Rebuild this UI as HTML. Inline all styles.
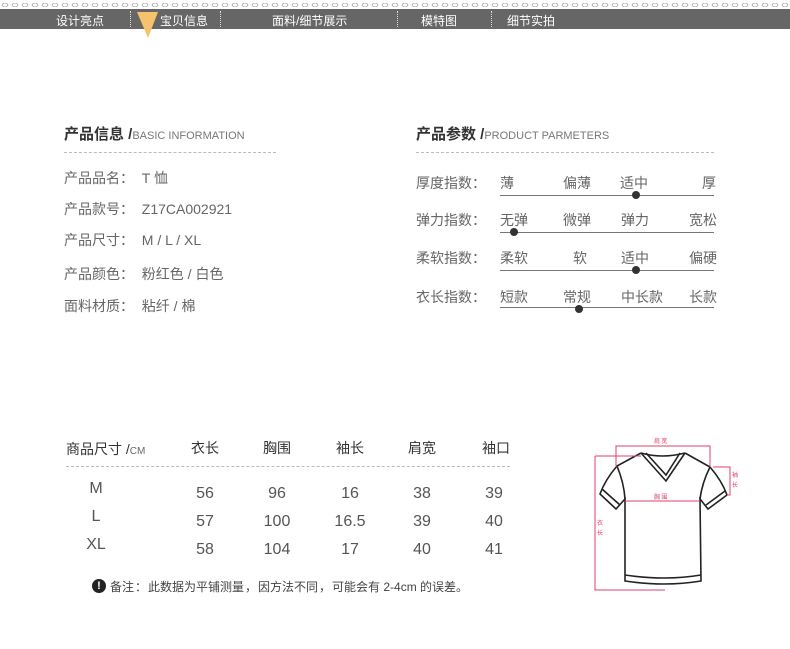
<!DOCTYPE html>
<html><head><meta charset="utf-8"><style>
*{margin:0;padding:0;box-sizing:border-box}
body{width:790px;height:649px;background:#fff;position:relative;overflow:hidden;font-family:"Liberation Sans","Noto Sans CJK SC",sans-serif;color:#555}
.a{position:absolute;white-space:nowrap}
.chain{position:absolute;left:0;top:2px;width:790px;height:6px;background:radial-gradient(ellipse 3.5px 2.3px at 5px 3px,transparent 2.2px,#aaa 2.4px,#aaa 3.2px,transparent 3.4px);background-size:10px 6px}
.nav{position:absolute;left:0;top:9px;width:790px;height:20px;background:#666;}
.nav span{position:absolute;top:3px;color:#fff;font-size:12px}
.dv{position:absolute;top:11px;height:16px;border-left:1px dotted #ddd}
.h{font-size:15px;font-weight:bold;color:#333}
.h small{font-size:11px;font-weight:normal;color:#777}
.dash{position:absolute;border-top:1px dashed #bbb;height:0}
.t{font-size:14px;color:#666}
.t b{font-weight:normal;display:inline-block;width:14px}
.ln{position:absolute;height:1px;background:#777}
.dot{position:absolute;width:8px;height:8px;border-radius:50%;background:#333}
.c{position:absolute;text-align:center;font-size:16px;color:#555;width:60px}
</style></head><body>
<div class="chain"></div>
<div class="nav">
<span style="left:56px">设计亮点</span>
<span style="left:160px">宝贝信息</span>
<span style="left:272px">面料/细节展示</span>
<span style="left:421px">模特图</span>
<span style="left:507px">细节实拍</span>
</div>
<div class="dv" style="left:130px"></div><div class="dv" style="left:220px"></div><div class="dv" style="left:397px"></div><div class="dv" style="left:491px"></div>
<svg class="a" style="left:137px;top:12px" width="22" height="27"><polygon points="0,0 21,0 11,26" fill="#f5c36b"/></svg>

<div class="a h" style="left:64px;top:123px">产品信息 /<small>BASIC INFORMATION</small></div>
<div class="dash" style="left:64px;top:152px;width:212px"></div>
<div class="a t" style="left:64px;top:168px">产品品名<b>：</b>&nbsp;&nbsp;T 恤</div>
<div class="a t" style="left:64px;top:199px">产品款号<b>：</b>&nbsp;&nbsp;Z17CA002921</div>
<div class="a t" style="left:64px;top:230px">产品尺寸<b>：</b>&nbsp;&nbsp;M / L / XL</div>
<div class="a t" style="left:64px;top:264px">产品颜色<b>：</b>&nbsp;&nbsp;粉红色 / 白色</div>
<div class="a t" style="left:64px;top:296px">面料材质<b>：</b>&nbsp;&nbsp;粘纤 / 棉</div>

<div class="a h" style="left:416px;top:123px">产品参数 /<small>PRODUCT PARMETERS</small></div>
<div class="dash" style="left:416px;top:152px;width:298px"></div>

<div class="a t" style="left:416px;top:173px">厚度指数<b>：</b></div>
<div class="a t" style="left:500px;top:173px">薄</div><div class="a t" style="left:563px;top:173px">偏薄</div><div class="a t" style="left:620px;top:173px">适中</div><div class="a t" style="left:702px;top:173px">厚</div>
<div class="ln" style="left:500px;top:195px;width:214px"></div><div class="dot" style="left:632px;top:191px"></div>

<div class="a t" style="left:416px;top:210px">弹力指数<b>：</b></div>
<div class="a t" style="left:500px;top:210px">无弹</div><div class="a t" style="left:563px;top:210px">微弹</div><div class="a t" style="left:621px;top:210px">弹力</div><div class="a t" style="left:689px;top:210px">宽松</div>
<div class="ln" style="left:500px;top:232px;width:214px"></div><div class="dot" style="left:510px;top:228px"></div>

<div class="a t" style="left:416px;top:248px">柔软指数<b>：</b></div>
<div class="a t" style="left:500px;top:248px">柔软</div><div class="a t" style="left:573px;top:248px">软</div><div class="a t" style="left:621px;top:248px">适中</div><div class="a t" style="left:689px;top:248px">偏硬</div>
<div class="ln" style="left:500px;top:270px;width:214px"></div><div class="dot" style="left:632px;top:266px"></div>

<div class="a t" style="left:416px;top:287px">衣长指数<b>：</b></div>
<div class="a t" style="left:500px;top:287px">短款</div><div class="a t" style="left:563px;top:287px">常规</div><div class="a t" style="left:621px;top:287px">中长款</div><div class="a t" style="left:689px;top:287px">长款</div>
<div class="ln" style="left:500px;top:307px;width:214px"></div><div class="dot" style="left:575px;top:305px"></div>

<div class="a" style="left:66px;top:439px;font-size:14px;color:#333">商品尺寸 /<span style="font-size:10px;color:#666">CM</span></div>
<div class="c" style="left:175px;top:438px;font-size:14px;color:#333">衣长</div>
<div class="c" style="left:247px;top:438px;font-size:14px;color:#333">胸围</div>
<div class="c" style="left:320px;top:438px;font-size:14px;color:#333">袖长</div>
<div class="c" style="left:392px;top:438px;font-size:14px;color:#333">肩宽</div>
<div class="c" style="left:466px;top:438px;font-size:14px;color:#333">袖口</div>
<div class="dash" style="left:66px;top:466px;width:444px"></div>

<div class="c" style="left:66px;top:480px">M</div><div class="c" style="left:66px;top:508px">L</div><div class="c" style="left:66px;top:536px">XL</div>
<div class="c" style="left:175px;top:485px">56</div><div class="c" style="left:247px;top:485px">96</div><div class="c" style="left:320px;top:485px">16</div><div class="c" style="left:392px;top:485px">38</div><div class="c" style="left:464px;top:485px">39</div>
<div class="c" style="left:175px;top:513px">57</div><div class="c" style="left:247px;top:513px">100</div><div class="c" style="left:320px;top:513px">16.5</div><div class="c" style="left:392px;top:513px">39</div><div class="c" style="left:464px;top:513px">40</div>
<div class="c" style="left:175px;top:541px">58</div><div class="c" style="left:247px;top:541px">104</div><div class="c" style="left:320px;top:541px">17</div><div class="c" style="left:392px;top:541px">40</div><div class="c" style="left:464px;top:541px">41</div>

<div class="a" style="left:92px;top:579px;width:14px;height:14px;border-radius:50%;background:#222;color:#fff;font-size:11px;font-weight:bold;text-align:center;line-height:14px">!</div>
<div class="a" style="left:110px;top:578px;font-size:12px;color:#444">备注<span style="display:inline-block;width:14px;text-align:center">：</span>此数据为平铺测量<span style="display:inline-block;width:14px;text-align:center">，</span>因方法不同<span style="display:inline-block;width:14px;text-align:center">，</span>可能会有 2-4cm 的误差。</div>

<svg class="a" style="left:580px;top:425px" width="170" height="170" viewBox="0 0 170 170">
<g fill="none" stroke="#222" stroke-width="1.6">
<path d="M61,28 L86,56 L105,28"/>
<path d="M66,28 L86,50 L100,28"/>
<path d="M61,28 Q82,34 105,28"/>
<path d="M61,28 L37,41 Q25,55 20,69 L36,84 L45,74 L45,156 Q85,162 121,156 L120,74 L128,84 L147,70 Q142,56 130,42 L105,28"/>
<path d="M37,41 Q44,58 45,74"/><path d="M130,42 Q122,58 120,74"/>
<path d="M22,64 L40,80"/><path d="M145,66 L126,80"/>
<path d="M45,150 Q85,156 121,150"/>
</g>
<g fill="none" stroke="#e0406a" stroke-width="1">
<path d="M36,42 L36,21 L130,21 L130,42"/>
<path d="M45,76 L120,76"/>
<path d="M15,31 L61,31"/><path d="M15,31 L15,165 L85,165"/>
<path d="M133,42 L150,42 L150,70 L147,70"/>
</g>
<g fill="#e0406a" font-size="6" font-family="Noto Sans CJK SC,sans-serif">
<text x="74" y="18">肩 宽</text><text x="74" y="74">胸 围</text>
<text x="152" y="52">袖</text><text x="152" y="62">长</text>
<text x="17" y="100">衣</text><text x="17" y="110">长</text>
</g>
</svg>
</body></html>
